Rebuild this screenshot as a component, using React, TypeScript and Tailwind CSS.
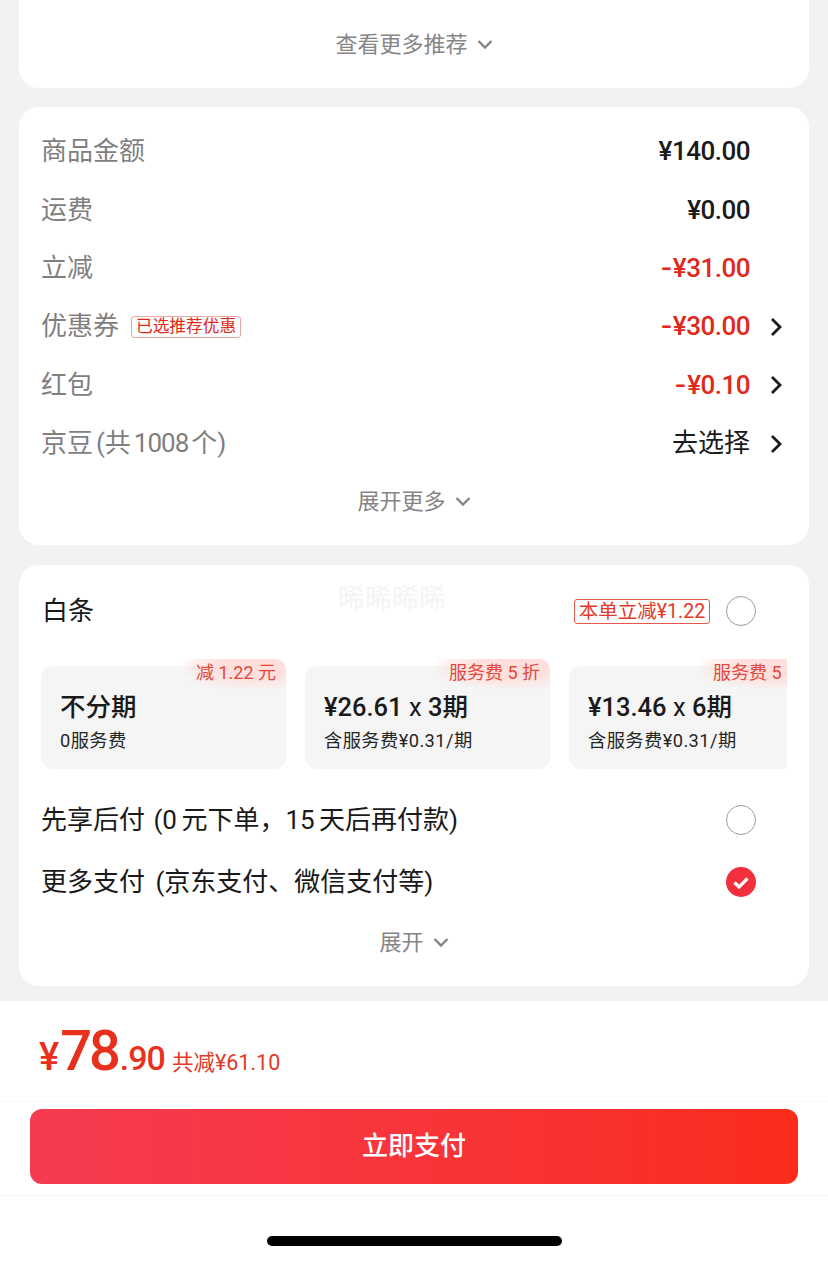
import { ReactNode } from 'react';

const Down = () => (
  <svg width="16" height="11" viewBox="0 0 16 11" fill="none" className="ml-[9px]">
    <path d="M1.5 2 8 8.5 14.5 2" stroke="#858585" strokeWidth="2.4" />
  </svg>
);

const Right = () => (
  <svg width="12" height="20" viewBox="0 0 12 20" fill="none">
    <path d="M2 2l8 8-8 8" stroke="#1a1a1a" strokeWidth="2.8" />
  </svg>
);

const Amount = ({ value, off }: { value: string; off?: boolean }) => (
  <span className={`ml-auto text-[26px] font-medium tracking-[-0.5px] ${off ? 'text-[#e0291a]' : 'text-[#1a1a1a]'}`}>
    {off && <span className="mr-[3px] inline-block w-[8px] scale-x-125">-</span>}
    {value}
  </span>
);

const Row = ({ label, children, arrow, tag }: { label: ReactNode; children: ReactNode; arrow?: boolean; tag?: string }) => (
  <div className="flex h-[58.4px] items-center pl-[22px] pr-[27px]">
    <span className="text-[26px] text-[#7f7f7f]">{label}</span>
    {tag && (
      <span className="ml-[12px] flex h-[22px] w-[110px] items-center justify-center rounded-[3px] border border-[#e9a9a0] text-[16.7px] text-[#e0291a]">
        {tag}
      </span>
    )}
    {children}
    <span className="ml-[20px] flex w-[12px] justify-center">{arrow && <Right />}</span>
  </div>
);

const More = ({ label }: { label: string }) => (
  <div className="flex h-[58px] items-center justify-center text-[22px] text-[#858585]">
    {label}
    <Down />
  </div>
);

const Plan = ({ title, sub, badge }: { title: ReactNode; sub: string; badge: string }) => (
  <div className="relative h-[103px] w-[245px] shrink-0 rounded-[12px] bg-[#f5f5f5] pl-[19px]">
    <span className="absolute -top-[7px] right-0 flex h-[30px] items-start rounded-tr-[10px] bg-[radial-gradient(ellipse_at_65%_25%,#ffdfdc_35%,rgba(255,228,226,0)_78%)] pl-[12px] pr-[10px] pt-[2px] text-[18px] leading-[24px] whitespace-nowrap text-[#e2483c]">
      {badge}
    </span>
    <div className="pt-[23px] text-[25.5px] leading-[36px] font-medium text-[#1a1a1a]">{title}</div>
    <div className="mt-[3px] text-[18.3px] leading-[26px] tracking-[0.4px] text-[#262626]">{sub}</div>
  </div>
);

const Radio = ({ checked }: { checked?: boolean }) =>
  checked ? (
    <svg width="30" height="30" viewBox="0 0 30 30">
      <circle cx="15" cy="15" r="15" fill="#f2303d" />
      <path d="M8.5 15.5l4.5 4.5 8.5-8.5" fill="none" stroke="#fff" strokeWidth="3.2" />
    </svg>
  ) : (
    <span className="size-[30px] rounded-full border border-[#9c9c9c]" />
  );

export default function App() {
  return (
    <div className="flex h-[1261px] w-[828px] flex-col overflow-hidden bg-[#f2f2f2] font-['Roboto','Noto_Sans_CJK_SC',sans-serif]">
      <div className="mx-[19px] flex h-[88px] items-center justify-center rounded-b-[20px] bg-white text-[22px] text-[#858585]">
        查看更多推荐
        <Down />
      </div>

      <div className="mx-[19px] mt-[19px] rounded-[20px] bg-white pt-[15.6px] pb-[14.4px]">
        <Row label="商品金额"><Amount value="¥140.00" /></Row>
        <Row label="运费"><Amount value="¥0.00" /></Row>
        <Row label="立减"><Amount value="¥31.00" off /></Row>
        <Row label="优惠券" arrow tag="已选推荐优惠"><Amount value="¥30.00" off /></Row>
        <Row label="红包" arrow><Amount value="¥0.10" off /></Row>
        <Row
          label={
            <span className="[word-spacing:-3.5px]">
              京豆 (共 <span className="tracking-[-1px]">1008</span> 个)
            </span>
          }
          arrow
        >
          <span className="ml-auto text-[26px] text-[#1a1a1a]">去选择</span>
        </Row>
        <More label="展开更多" />
      </div>

      <div className="relative mx-[19px] mt-[20px] rounded-[20px] bg-white pt-[17px] pb-[15px]">
        <span className="absolute top-[14px] left-[319px] text-[27px] text-[#f4f4f4]">晞晞晞晞</span>
        <div className="flex h-[58px] items-center pr-[53px] pl-[23px]">
          <span className="text-[26px] text-[#1a1a1a]">白条</span>
          <span className="ml-auto flex h-[25px] w-[136px] items-center justify-center rounded-[3px] border border-[#e4574b] text-[19.5px] text-[#e2392b]">
            本单立减¥1.22
          </span>
          <span className="ml-[16px] flex"><Radio /></span>
        </div>
        <div className="mt-[19px] ml-[22px] flex w-[746px] gap-[19px] overflow-hidden pt-[7px]">
          <Plan title="不分期" sub="0服务费" badge="减 1.22 元" />
          <Plan title={<>¥26.61 <span className="font-normal">x</span> 3期</>} sub="含服务费¥0.31/期" badge="服务费 5 折" />
          <Plan title={<>¥13.46 <span className="font-normal">x</span> 6期</>} sub="含服务费¥0.31/期" badge="服务费 5 折" />
        </div>
        <div className="mt-[20px] flex h-[62px] items-center pr-[53px] pl-[22px] text-[26px] text-[#1a1a1a]">
          <span className="[word-spacing:2px]">
            先享后付 <span className="[word-spacing:-2px]">(0 元下单，15 天后再付款)</span>
          </span>
          <span className="ml-auto flex"><Radio /></span>
        </div>
        <div className="flex h-[62px] items-center pr-[53px] pl-[22px] text-[26px] text-[#1a1a1a] [word-spacing:4px]">
          更多支付 (京东支付、微信支付等)
          <span className="ml-auto flex"><Radio checked /></span>
        </div>
        <More label="展开" />
      </div>

      <div className="mt-[15px] flex flex-1 flex-col bg-white">
        <div className="flex h-[101px] items-baseline border-b border-[#f8f8f8] pt-[14px] pl-[39px] text-[#e8301c]">
          <span className="text-[38px] font-medium">¥</span>
          <span className="ml-[1px] text-[56px] leading-[72px] font-medium tracking-[-3px]">78</span>
          <span className="ml-[2px] text-[34px] font-medium tracking-[-1px]">.90</span>
          <span className="ml-[7px] text-[21.5px] text-[#e2392b]">共减¥61.10</span>
        </div>
        <div className="mx-[30px] mt-[7px] flex h-[75px] items-center justify-center rounded-[12px] bg-gradient-to-r from-[#f53b50] to-[#fa2c19] text-[26px] font-medium text-white">
          立即支付
        </div>
        <div className="mt-[11px] flex flex-1 justify-center border-t border-[#f6f6f6] pt-[40px]">
          <span className="h-[10px] w-[295px] rounded-full bg-black" />
        </div>
      </div>
    </div>
  );
}
